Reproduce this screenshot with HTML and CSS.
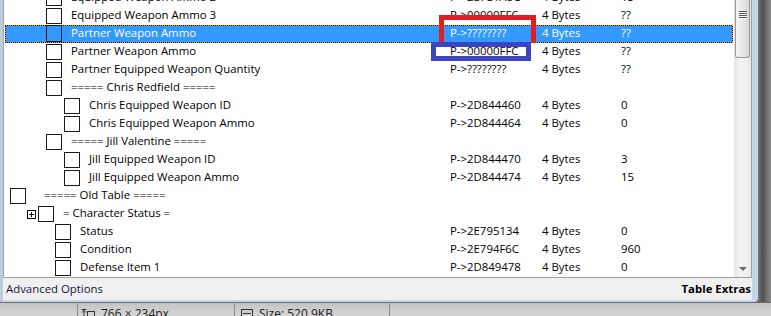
FILE: index.html
```html
<!DOCTYPE html>
<html>
<head>
<meta charset="utf-8">
<link rel="stylesheet" href="styles.css">
</head>
<body>
<div class="screen">
  <div class="top">
    <div class="win">
      <div class="list">
        <div class="rows">
          <div class="scroller">
            <div class="row"><div class="desc l2"><span class="cb"></span><span class="txt">Equipped Weapon Ammo 2</span></div><div class="addr">P-&gt;2E7E1A8C</div><div class="type">4 Bytes</div><div class="val">15</div></div>
            <div class="row"><div class="desc l2"><span class="cb"></span><span class="txt">Equipped Weapon Ammo 3</span></div><div class="addr">P-&gt;00000FFC</div><div class="type">4 Bytes</div><div class="val">??</div></div>
            <div class="row sel"><div class="desc l2"><span class="cb"></span><span class="txt">Partner Weapon Ammo</span></div><div class="addr">P-&gt;????????</div><div class="type">4 Bytes</div><div class="val">??</div></div>
            <div class="row"><div class="desc l2"><span class="cb"></span><span class="txt">Partner Weapon Ammo</span></div><div class="addr">P-&gt;00000FFC</div><div class="type">4 Bytes</div><div class="val">??</div></div>
            <div class="row"><div class="desc l2"><span class="cb"></span><span class="txt">Partner Equipped Weapon Quantity</span></div><div class="addr">P-&gt;????????</div><div class="type">4 Bytes</div><div class="val">??</div></div>
            <div class="row"><div class="desc l2"><span class="cb"></span><span class="txt">===== Chris Redfield =====</span></div></div>
            <div class="row"><div class="desc l3"><span class="cb"></span><span class="txt">Chris Equipped Weapon ID</span></div><div class="addr">P-&gt;2D844460</div><div class="type">4 Bytes</div><div class="val">0</div></div>
            <div class="row"><div class="desc l3"><span class="cb"></span><span class="txt">Chris Equipped Weapon Ammo</span></div><div class="addr">P-&gt;2D844464</div><div class="type">4 Bytes</div><div class="val">0</div></div>
            <div class="row"><div class="desc l2"><span class="cb"></span><span class="txt">===== Jill Valentine =====</span></div></div>
            <div class="row"><div class="desc l3"><span class="cb"></span><span class="txt">Jill Equipped Weapon ID</span></div><div class="addr">P-&gt;2D844470</div><div class="type">4 Bytes</div><div class="val">3</div></div>
            <div class="row"><div class="desc l3"><span class="cb"></span><span class="txt">Jill Equipped Weapon Ammo</span></div><div class="addr">P-&gt;2D844474</div><div class="type">4 Bytes</div><div class="val">15</div></div>
            <div class="row"><div class="desc l0"><span class="cb"></span><span class="txt wide">===== Old Table =====</span></div></div>
            <div class="row"><div class="desc l1"><span class="exp"></span><span class="cb"></span><span class="txt">= Character Status =</span></div></div>
            <div class="row"><div class="desc l4"><span class="cb"></span><span class="txt">Status</span></div><div class="addr">P-&gt;2E795134</div><div class="type">4 Bytes</div><div class="val">0</div></div>
            <div class="row"><div class="desc l4"><span class="cb"></span><span class="txt">Condition</span></div><div class="addr">P-&gt;2E794F6C</div><div class="type">4 Bytes</div><div class="val">960</div></div>
            <div class="row"><div class="desc l4"><span class="cb"></span><span class="txt">Defense Item 1</span></div><div class="addr">P-&gt;2D849478</div><div class="type">4 Bytes</div><div class="val">0</div></div>
          </div>
        </div>
        <div class="vscroll">
          <div class="thumb"><div class="grip"></div></div>
          <div class="track"></div>
          <div class="arrow"><span class="tri"></span></div>
        </div>
      </div>
      <div class="footer"><span>Advanced Options</span><span class="extras">Table Extras</span></div>
    </div>
    <div class="shadow"></div>
  </div>
  <div class="status">
    <div class="sitem first">
      <svg class="ico" width="14" height="12" viewBox="0 0 14 12"><path d="M0.5 0.5h5M3 1v11M1 3.5l2-2 2 2" fill="none" stroke="#333" stroke-width="1"/><rect x="6.5" y="2.5" width="7" height="9" fill="none" stroke="#333"/></svg>
      <span>766 × 234px</span>
    </div>
    <div class="sitem second">
      <svg class="ico" width="12" height="12" viewBox="0 0 12 12"><rect x="0.5" y="0.5" width="11" height="8" fill="none" stroke="#333"/><path d="M2 4.5h8" stroke="#333"/></svg>
      <span>Size: 520.9KB</span>
    </div>
    <div class="sitem third"></div>
  </div>
  <div class="mark red"></div>
  <div class="mark blue"></div>
</div>
</body>
</html>
```

FILE: styles.css
```css
html, body {
  margin: 0;
  padding: 0;
}
body {
  width: 771px;
  height: 316px;
  overflow: hidden;
  background: #5a5a5a;
  font-family: "Open Sans", "Noto Sans", sans-serif;
}
.screen {
  position: relative;
  width: 771px;
  height: 316px;
  display: flex;
  flex-direction: column;
}
.top {
  display: flex;
  height: 302px;
}
.win {
  width: 758px;
  height: 302px;
  box-sizing: border-box;
  border-left: 3px solid #bccbdd;
  border-right: 6px solid #c3d5eb;
  border-bottom: 2px solid #c3d5eb;
  border-bottom-right-radius: 4px;
  background: #f0f0f0;
  display: flex;
  flex-direction: column;
}
.shadow {
  flex: 1;
  background: linear-gradient(90deg, #7a7a7a, #505050 35%, #8a8a8a);
}
.list {
  height: 278px;
  box-sizing: border-box;
  display: flex;
  background: #fff;
  border-left: 1px solid #9aa7b6;
  border-right: 1px solid #a0a0a0;
  border-bottom: 1px solid #a0a0a0;
}
.rows {
  flex: 1;
  overflow: hidden;
  padding: 0 1px;
}
.scroller {
  margin-top: -11px;
}
.row {
  height: 18px;
  display: flex;
  align-items: flex-start;
  font-size: 11.4px;
  line-height: 16px;
  color: #000;
  white-space: nowrap;
}
.row.sel {
  color: #fff;
  background:
    repeating-linear-gradient(90deg, #000 0 1px, #e9a23b 1px 2px) top / 100% 1px no-repeat,
    repeating-linear-gradient(90deg, #000 0 1px, #e9a23b 1px 2px) bottom / 100% 1px no-repeat,
    repeating-linear-gradient(0deg, #000 0 1px, #e9a23b 1px 2px) left / 1px 100% no-repeat,
    repeating-linear-gradient(0deg, #000 0 1px, #e9a23b 1px 2px) right / 1px 100% no-repeat,
    #3399ff;
}
.desc {
  flex: 0 0 445px;
  box-sizing: border-box;
  display: flex;
  align-items: flex-start;
}
.desc.l0 { padding-left: 5px; }
.desc.l1 { padding-left: 22px; }
.desc.l2 { padding-left: 41px; }
.desc.l3 { padding-left: 59px; }
.desc.l4 { padding-left: 50px; }
.cb {
  width: 16px;
  height: 16px;
  margin-top: 1px;
  box-sizing: border-box;
  border: 1px solid #1a1a1a;
  background: #fff;
  flex: none;
}
.row.sel .cb {
  background: transparent;
  height: 17px;
  margin-top: 0;
}
.exp {
  width: 9px;
  height: 9px;
  margin-top: 5px;
  margin-right: 2px;
  box-sizing: border-box;
  border: 1px solid #111;
  flex: none;
  background:
    linear-gradient(#111, #111) center / 5px 1px no-repeat,
    linear-gradient(#111, #111) center / 1px 5px no-repeat,
    #fff;
}
.txt {
  margin-left: 9px;
}
.txt.wide {
  margin-left: 18px;
}
.addr {
  flex: 0 0 92px;
}
.type {
  flex: 0 0 79px;
}
.val {
  flex: 1;
}
.vscroll {
  flex: 0 0 17px;
  display: flex;
  flex-direction: column;
  align-items: center;
  background: linear-gradient(90deg, #e4e4e4, #f2f2f2 30%, #f2f2f2 70%, #e6e6e6);
}
.thumb {
  width: 15px;
  height: 58px;
  box-sizing: border-box;
  border: 1px solid #979797;
  border-top: none;
  border-radius: 0 0 3px 3px;
  background: linear-gradient(90deg, #f4f4f4, #e8e8e8 50%, #d6d6d6);
  display: flex;
  justify-content: center;
  padding-top: 11px;
}
.grip {
  width: 8px;
  height: 8px;
  background: repeating-linear-gradient(180deg, #555 0 1px, #fbfbfb 1px 2px);
}
.track {
  flex: 1;
}
.arrow {
  height: 17px;
  display: flex;
  align-items: center;
  justify-content: center;
}
.tri {
  width: 0;
  height: 0;
  border-left: 4px solid transparent;
  border-right: 4px solid transparent;
  border-top: 4px solid #6a6a6a;
}
.footer {
  height: 22px;
  display: flex;
  justify-content: space-between;
  align-items: center;
  padding: 0 1px 0 3px;
  font-size: 11.4px;
  line-height: 22px;
  color: #14143a;
}
.extras {
  font-weight: bold;
  color: #000;
}
.status {
  height: 14px;
  display: flex;
  overflow: hidden;
  background: linear-gradient(#6c6c6c 0 1px, #c4c4c4 1px, #d6d6d6);
  font-size: 12px;
  line-height: 16px;
  color: #222;
}
.sitem {
  display: flex;
  align-items: flex-start;
  gap: 6px;
  padding-top: 4px;
  box-sizing: border-box;
  border-right: 1px solid #8a8a8a;
}
.sitem.first {
  margin-left: 77px;
  width: 158px;
  border-left: 1px solid #8a8a8a;
  padding-left: 3px;
}
.sitem.second {
  width: 155px;
  padding-left: 6px;
}
.sitem.third {
  flex: 1;
  border-right: none;
}
.ico {
  margin-top: 3px;
  flex: none;
}
.mark {
  position: absolute;
  box-sizing: border-box;
  border-style: solid;
  border-width: 5px;
}
.mark.red {
  left: 439px;
  top: 15px;
  width: 97px;
  height: 28px;
  border-bottom-width: 0;
  border-color: #e11d27;
}
.mark.blue {
  left: 431px;
  top: 42px;
  width: 100px;
  height: 19px;
  border-color: #3c44c2;
}
```
